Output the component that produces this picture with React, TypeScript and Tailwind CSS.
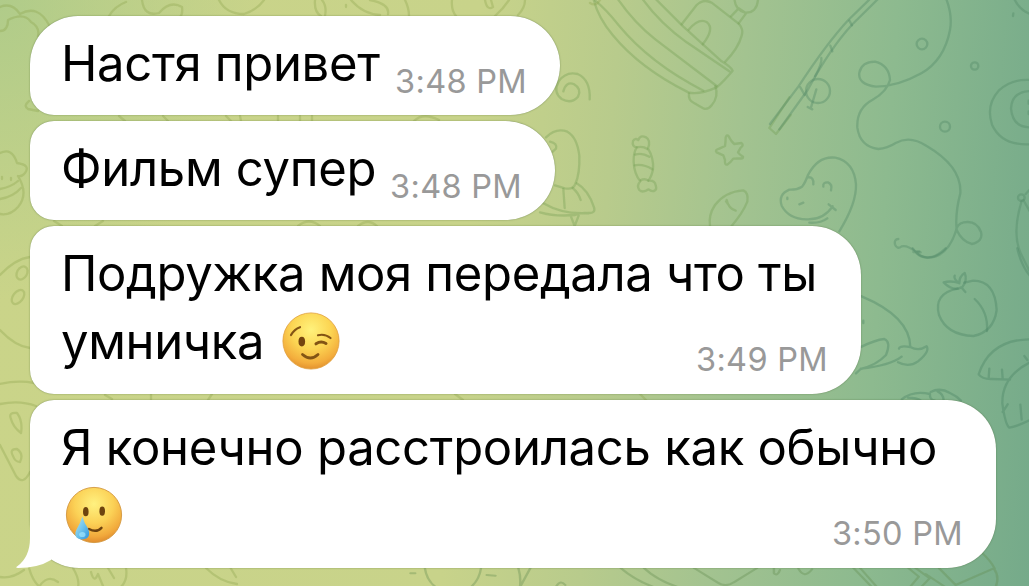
import clsx from 'clsx'
import type { ReactNode } from 'react'

interface Line {
  text: string
  className?: string
  emoji?: ReactNode
}

interface Message {
  id: number
  lines: Line[]
  time: string
  className: string
  tail?: boolean
}

function WinkEmoji() {
  return (
    <svg viewBox="0 0 60 60" className="h-[60px] w-[60px] shrink-0">
      <defs>
        <radialGradient id="wink-face" cx="50%" cy="30%" r="70%">
          <stop offset="0" stopColor="#fff27c" />
          <stop offset="0.5" stopColor="#fcd553" />
          <stop offset="0.85" stopColor="#f3ad3c" />
          <stop offset="1" stopColor="#e3922f" />
        </radialGradient>
      </defs>
      <circle cx="30" cy="30" r="28.1" fill="url(#wink-face)" stroke="#dfa03c" strokeWidth="0.8" />
      <g fill="none" stroke="#835414" strokeLinecap="round">
        <path d="M10 24 Q13.5 18 19 16.2" strokeWidth="2.2" />
        <path d="M37 24.2 Q44 22.5 49.5 27" strokeWidth="2.2" />
        <path d="M35 32.8 Q40 29.5 45 32.5" strokeWidth="3" />
        <path d="M21.5 43.5 Q29.5 50.5 37 43.5" strokeWidth="2.8" />
      </g>
      <ellipse cx="20.8" cy="30.6" rx="3.3" ry="4.8" fill="#74440f" />
    </svg>
  )
}

function TearEmoji() {
  return (
    <svg viewBox="0 0 60 60" className="h-[60px] w-[60px] shrink-0">
      <defs>
        <radialGradient id="tear-face" cx="50%" cy="30%" r="70%">
          <stop offset="0" stopColor="#fff180" />
          <stop offset="0.5" stopColor="#fbd156" />
          <stop offset="0.85" stopColor="#f1a83b" />
          <stop offset="1" stopColor="#e08c2e" />
        </radialGradient>
        <linearGradient id="tear-drop" x1="0" y1="0" x2="1" y2="1">
          <stop offset="0" stopColor="#b9e4ee" />
          <stop offset="0.5" stopColor="#6fc4ec" />
          <stop offset="1" stopColor="#2d92dc" />
        </linearGradient>
      </defs>
      <circle cx="30" cy="30" r="27.6" fill="url(#tear-face)" stroke="#d3963d" strokeWidth="0.9" />
      <ellipse cx="21.8" cy="26.7" rx="2.8" ry="4.6" fill="#6d430f" />
      <ellipse cx="38.2" cy="26.2" rx="2.8" ry="4.6" fill="#6d430f" />
      <path d="M25 44 Q32.5 48 37.5 42.8" fill="none" stroke="#6d430f" strokeWidth="2.4" strokeLinecap="round" />
      <path
        d="M18.3 31.5 Q20 37.5 24 43.5 Q28 53.5 18.3 54.5 Q8.5 53.5 12.5 44.5 Q16.5 38 18.3 31.5Z"
        fill="url(#tear-drop)"
      />
      <ellipse cx="18.3" cy="49.5" rx="3.2" ry="2.6" fill="#9ee3fb" opacity="0.75" />
    </svg>
  )
}

const messages: Message[] = [
  {
    id: 1,
    lines: [{ text: 'Настя привет', className: 'tracking-[-0.32px]' }],
    time: '3:48 PM',
    className: 'w-[530px] pb-[17px] rounded-l-[24px] rounded-r-[49.5px] rounded-tl-[48px]',
  },
  {
    id: 2,
    lines: [{ text: 'Фильм супер', className: 'tracking-[-0.3px]' }],
    time: '3:48 PM',
    className: 'w-[525px] pb-[17px] rounded-l-[24px] rounded-r-[49.5px]',
  },
  {
    id: 3,
    lines: [
      { text: 'Подружка моя передала что ты', className: 'tracking-[-0.34px]' },
      { text: 'умничка', className: 'tracking-[-0.34px]', emoji: <WinkEmoji /> },
    ],
    time: '3:49 PM',
    className: 'w-[831px] pb-[18px] rounded-l-[24px] rounded-r-[49px]',
  },
  {
    id: 4,
    lines: [
      { text: 'Я конечно расстроилась как обычно', className: 'tracking-[-0.27px]' },
      { text: '', emoji: <TearEmoji /> },
    ],
    time: '3:50 PM',
    className: 'w-[966px] pb-[18px] rounded-r-[49px] rounded-tl-[24px] rounded-bl-[49px]',
    tail: true,
  },
]

// Line-art wallpaper behind the conversation
function Wallpaper() {
  return (
    <svg
      viewBox="0 0 1029 586"
      className="absolute inset-0 h-full w-full"
      fill="none"
      strokeLinecap="round"
      strokeLinejoin="round"
    >
      {/* boat, spiral, penguin, candy, star, fish */}
      <g transform="translate(540 0) scale(.33333)" stroke="#6f9b50" strokeOpacity="0.34" strokeWidth="7">
        <path d="M160 -6 Q172 50 218 105 Q300 205 445 277 Q475 286 530 262 Q552 243 578 212 Q572 200 545 184 L430 80 L345 -5" />
        <path d="M166 2 Q200 30 236 76 Q330 190 490 272" />
        <path d="M232 -5 Q282 68 346 118 L530 258 M306 -5 Q360 70 440 127 L568 214" />
        <path d="M425 73 L470 15 Q490 -5 515 8 L592 68 Q612 84 605 107 Q595 145 556 185" />
        <path d="M446 89 Q478 52 501 67 Q525 86 488 133" />
        <path d="M573 49 L596 25 L618 40 L596 70 M584 2 Q587 30 615 38 Q650 40 654 0" />
        <path d="M447 280 Q444 300 462 309 L492 326 Q505 329 515 316 Q537 290 526 258" />
        <path d="M70 274 Q78 244 101 252 Q126 266 114 290 Q94 313 65 297 Q38 276 56 244 Q78 213 113 222 Q152 240 149 298" />
        <path d="M18 412 Q48 382 82 395 Q112 412 118 468 Q120 520 106 552 Q99 570 75 565 L45 556" />
        <path d="M30 425 Q53 430 48 446 L38 455 M70 567 L74 624 M98 564 Q115 578 122 600 M110 550 Q145 570 162 622 Q168 640 145 639 Q70 645 10 610 M0 637 Q45 650 105 645 Q128 636 146 640 M93 650 L104 678 L116 647" />
        <path d="M290 442 Q275 440 279 423 Q285 413 295 420 Q300 404 318 412 Q333 421 324 445 Q342 475 339 508 Q335 530 325 542 Q345 540 347 556 Q352 568 342 573 Q333 575 326 568 Q308 580 298 570 Q289 557 301 544 Q282 520 281 485 Q280 459 290 442Z" />
        <path d="M290 442 Q310 438 322 447 M285 464 Q306 457 328 470 M284 496 Q310 491 337 508 M302 541 Q314 534 325 542" />
        <path d="M565 407 Q574 425 583 432 L604 429 Q613 435 602 443 L594 457 Q598 463 609 470 Q610 477 601 475 L580 476 Q573 486 562 494 Q553 495 555 480 L550 466 L530 457 Q523 450 538 446 L555 438 Q557 425 557 412 Q560 404 565 407Z" />
        <path d="M510 678 Q505 645 525 615 Q555 575 610 571 Q626 578 622 605 Q608 640 573 680 M560 600 Q565 625 587 632 M558 604 L567 616" />
        <path d="M688 384 L748 292 M688 384 L708 402 L752 345" />
      </g>

      {/* fishing rod and line, dinosaur, bubbles */}
      <g transform="translate(780 0) scale(.33333)" stroke="#518967" strokeOpacity="0.38" strokeWidth="7">
        <path d="M-30 372 L55 260 Q140 130 205 60 L272 -5 M-2 388 L83 270 Q150 145 218 72 L296 -5" />
        <path d="M124 174 Q127 190 105 229 M151 137 L157 154 M208 62 L216 76 M61 262 L74 285 M109 268 L92 326 M83 321 L97 328" />
        <circle cx="114" cy="273" r="36" />
        <path d="M498 -5 Q518 45 510 90 Q493 180 424 220 Q352 260 288 260 Q233 253 238 218 Q245 185 285 185 Q327 195 330 240 Q321 275 278 299 Q229 325 232 383 Q240 440 295 447 Q322 445 347 429 Q390 405 440 438 Q546 500 541 580 Q525 640 530 690 Q546 724 575 732 Q610 724 603 696 Q590 660 551 667 Q530 671 527 696 Q500 775 440 773 Q415 770 405 754 Q382 735 365 739 Q351 750 345 733 Q342 718 355 717 M400 756 L422 757" />
        <circle cx="426" cy="132" r="16" />
        <circle cx="584" cy="198" r="11" />
        <circle cx="495" cy="380" r="15" />
        <path d="M702 -5 Q718 30 750 42 M700 40 L699 48 M750 240 Q695 236 656 272 Q617 315 636 374 Q665 437 750 433 M750 273 Q696 275 693 325 Q698 382 750 382 M746 302 V311 M746 334 V342" />
        <path d="M178 694 Q230 610 228 553 Q222 485 166 473 Q114 467 84 525 Q75 550 66 560 Q50 570 28 569 Q-6 583 5 617 Q25 656 80 658 Q130 660 158 619 M146 613 L167 630 M84 532 Q102 530 100 553 M130 560 Q128 546 144 547 Q158 553 153 571 M58 613 L70 608 M22 593 V597 M88 668 Q122 670 142 655" />
        <circle cx="724" cy="593" r="10" />
        <path d="M725 603 Q695 700 722 760 L748 812 M730 600 L750 635 M737 582 L750 568" />
      </g>

      {/* whale, peach, wing */}
      <g transform="translate(780 250) scale(.33333)" stroke="#4a8365" strokeOpacity="0.38" strokeWidth="7">
        <path d="M245 139 Q390 200 391 291 Q416 305 440 289 Q450 305 414 334 Q386 354 354 337 M357 296 Q360 285 391 291 M245 290 Q285 270 313 267 Q334 276 318 315 Q290 345 242 357 L228 370 M242 356 Q330 347 365 320 M250 212 V219" />
        <path d="M533 116 Q460 130 477 195 Q500 255 580 258 Q641 246 650 180 Q645 92 580 92 L553 98" />
        <path d="M584 147 Q625 185 621 243 M556 126 L544 112 Q518 125 491 97 Q515 91 536 99 Q520 85 524 77 M538 100 Q537 80 554 69 Q563 89 548 110" />
        <path d="M398 -5 Q440 50 497 -5 M410 4 H418 M712 -5 Q723 45 750 78 M750 268 Q630 269 596 373 Q607 388 636 387 L690 389 M628 356 L626 384 M666 359 L668 386 M750 337 Q665 380 667 461 Q676 525 688 533 Q710 530 748 511 M683 463 L668 486 M721 464 L725 509 M733 318 L742 330" />
        <path d="M365 448 Q400 420 450 432 Q448 449 465 452 M384 443 Q410 443 423 452 M452 426 Q480 411 510 429 Q530 438 543 452 M473 424 Q490 432 491 451" />
      </g>

      {/* fragments along the left edge and between bubbles */}
      <g stroke="#8da54b" strokeOpacity="0.34" strokeWidth="2.3">
        <path d="M0 7 Q12 2 20 14 Q38 4 49 25 M0 31 Q8 31 8 20 Q24 12 31 22 Q40 27 38 36 M29 101 Q23 106 28 109 L38 111" />
        <path d="M0 153 Q12 147 17 163 Q31 165 25 173 Q22 177 18 176 Q29 194 18 207 Q10 216 0 214 M0 189 Q11 187 18 181 M0 199 Q13 197 21 188 M2 177 V179 M11 178 V180" />
        <path d="M0 275 Q15 259 30 257 M0 330 Q15 346 30 348" />
        <ellipse cx="22" cy="273" rx="5" ry="7" transform="rotate(30 22 273)" />
        <ellipse cx="18" cy="297" rx="5" ry="8" transform="rotate(38 18 297)" />
        <path d="M0 384 Q18 380 34 383 M0 404 Q20 400 36 406 M0 445 L16 476 Q23 486 30 472 M11 419 Q8 412 17 413 Q23 421 21 433 Q13 427 11 419Z M13 456 Q9 449 17 449 Q24 454 20 462 Q15 462 13 456Z" />
        <path d="M0 577 Q12 579 24 570 M29 568 Q33 582 40 587 M39 587 Q47 574 58 582 M73 568 Q80 580 78 587 M91 572 Q94 584 98 574 L103 586 M108 568 L114 578 M126 568 Q128 580 121 587 M206 568 Q220 582 237 584 M230 567 L236 577" />
        <path d="M109 16 Q115 6 126 2 M142 0 Q144 17 159 13 Q170 0 182 7 Q183 14 180 17 M219 0 Q226 14 244 14 Q257 10 264 0 M315 0 Q314 12 321 16 M322 0 Q327 6 325 16 M346 5 V7 M351 0 Q363 14 380 15 M370 0 Q390 4 388 14 M405 0 Q409 8 409 16 M452 0 Q451 10 456 16 M485 0 Q487 11 493 7 L491 0 M509 0 Q503 9 495 16 M525 0 Q525 8 518 15 M600 0 Q596 7 590 3" />
        <path d="M119 116 L125 121 M163 116 L168 121 M226 116 L231 121 M240 116 L241 121 M278 116 V121 M300 116 V121 M312 116 V121 M414 121 Q423 112 439 120 M54 221 L62 226 M95 226 L103 221 M298 226 Q309 217 320 226 M358 226 Q368 218 377 226 M105 395 L112 399 M151 394 V400 M212 394 L208 400 M455 394 L463 400 M640 394 L646 400" />
      </g>

      {/* bottom strip: scaled from the 629px wide band under the last bubble */}
      <g transform="translate(400 550) scale(.4012 .3333)" stroke="#648d50" strokeOpacity="0.36" strokeWidth="6">
        <path d="M62 54 Q66 90 88 110 M202 54 Q198 88 178 110 M26 70 H38 M216 75 L238 77 M295 54 Q302 83 299 110 M325 54 L302 105 M390 108 Q400 88 412 105 M550 54 Q585 90 630 110 M608 54 Q640 90 690 110 M733 54 L792 98 Q812 113 832 97 L890 54 M932 54 V70 Q941 80 947 60 M993 56 Q1008 88 1027 58" />
        <path d="M1130 54 L1175 110 M1147 54 L1188 110 M1267 54 L1293 80 L1272 110 M1285 54 L1320 85 L1300 110 M1310 72 L1358 110 M1343 54 L1385 105 L1480 55 Q1495 80 1485 110 M1450 8 Q1472 32 1482 55" />
      </g>
    </svg>
  )
}

function Bubble({ message }: { message: Message }) {
  return (
    <div
      className={clsx(
        'relative bg-white pt-[14px] pr-[33px] pl-[31px] shadow-[0_0_1.5px_rgba(50,80,30,0.65)]',
        message.className
      )}
    >
      {message.tail && (
        <svg viewBox="0 0 50 50" className="absolute bottom-0 -left-[15px] h-[50px] w-[50px] overflow-visible">
          <path d="M15 0 V20 Q15 39 2 48.6 Q0 50 3 50 Q23 50 36 42 L42 10 Z" fill="#fff" />
        </svg>
      )}
      {message.lines.map((line, i) => (
        <div key={i} className="relative flex h-[68px] items-end justify-between">
          <div className="flex h-[68px] items-center">
            {line.text && <span className={clsx('whitespace-nowrap', line.className)}>{line.text}</span>}
            {line.emoji && (
              <span className={clsx('-mt-[2px] flex', line.text ? 'ml-[17px]' : 'ml-[3px]')}>{line.emoji}</span>
            )}
          </div>
          {i === message.lines.length - 1 && (
            <span className="-mb-[4px] text-[32.5px] leading-[40px] tracking-[0.3px] whitespace-nowrap text-[#999]">
              {message.time}
            </span>
          )}
        </div>
      ))}
    </div>
  )
}

export default function App() {
  return (
    <main className="relative h-[586px] w-[1029px] overflow-hidden bg-[radial-gradient(ellipse_260px_300px_at_0_0,rgba(150,195,138,0.5),transparent),linear-gradient(94deg,#cad489_0%,#c8d38a_45%,#b8cb8c_58%,#a3c390_70%,#8dba8f_84%,#75aa8a_100%)] font-['Inter','Liberation_Sans',sans-serif] text-[49px] leading-[68px] text-black">
      <Wallpaper />
      <div className="flex flex-col items-start gap-[6px] pt-[16px] pl-[30px]">
        {messages.map((message) => (
          <Bubble key={message.id} message={message} />
        ))}
      </div>
    </main>
  )
}
